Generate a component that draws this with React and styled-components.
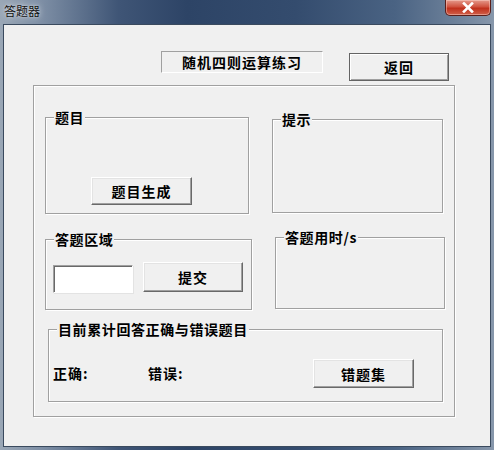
import React from "react";
import styled, { createGlobalStyle } from "styled-components";

const GlobalStyle = createGlobalStyle`
  html, body {
    margin: 0;
    padding: 0;
    overflow: hidden;
    background: #6d8098;
  }
  * {
    box-sizing: border-box;
  }
`;

const FONT = `"Noto Sans CJK SC", "Liberation Sans", sans-serif`;

export default function App() {
  return (
    <>
      <GlobalStyle />
      <Window>
        <TitleBar>
          <Caption>答题器</Caption>
          <CloseButton aria-label="close">
            <svg width="14" height="11" viewBox="0 0 14 11">
              <path
                d="M3 1.5 L11 9.5 M11 1.5 L3 9.5"
                stroke="#fff"
                strokeWidth="2.6"
                strokeLinecap="square"
              />
            </svg>
          </CloseButton>
        </TitleBar>
        <Client>
          <Header>
            <Banner>随机四则运算练习</Banner>
            <Button $w={100} $h={28} $mt={2} $default>
              返回
            </Button>
          </Header>
          <Frame>
            <Row>
              <Group $w={204} $h={97}>
                <Legend>题目</Legend>
                <GroupBody $pt={59} $pl={45}>
                  <Button $w={101} $h={28}>题目生成</Button>
                </GroupBody>
              </Group>
              <Group $w={171} $h={94} $ml={23} $mt={2}>
                <Legend>提示</Legend>
              </Group>
            </Row>
            <Row $mt={23}>
              <Group $w={207} $h={71} $mt={2}>
                <Legend>答题区域</Legend>
                <GroupBody $pt={22} $pl={7}>
                  <AnswerInput />
                  <Button $w={100} $h={30} $ml={10}>
                    提交
                  </Button>
                </GroupBody>
              </Group>
              <Group $w={170} $h={72} $ml={23}>
                <Legend>答题用时/s</Legend>
              </Group>
            </Row>
            <Row $mt={19}>
              <Group $w={395} $h={73} $ml={3}>
                <Legend>目前累计回答正确与错误题目</Legend>
                <GroupBody $pt={29} $pl={4}>
                  <Stat $w={95}>正确:</Stat>
                  <Stat $w={165}>错误:</Stat>
                  <Button $w={101} $h={29}>错题集</Button>
                </GroupBody>
              </Group>
            </Row>
          </Frame>
        </Client>
      </Window>
    </>
  );
}

const Window = styled.div`
  width: 494px;
  height: 450px;
  display: flex;
  flex-direction: column;
  padding: 0 3px 3px;
  background: linear-gradient(
    90deg,
    #9aa7b6 0%,
    #7f90a6 8%,
    #3f5576 24%,
    #2d4466 38%,
    #344c6e 60%,
    #4a6383 80%,
    #6c8099 92%,
    #8797ab 100%
  );
`;

const TitleBar = styled.div`
  height: 24px;
  flex: none;
  display: flex;
  justify-content: space-between;
  align-items: flex-start;
`;

const Caption = styled.span`
  margin: 3px 0 0 1px;
  font-family: ${FONT};
  font-size: 12px;
  line-height: 16px;
  color: #111;
  text-shadow: 0 0 6px rgba(255, 255, 255, 0.75), 0 0 2px rgba(255, 255, 255, 0.5);
`;

const CloseButton = styled.div`
  width: 46px;
  height: 16px;
  display: flex;
  align-items: center;
  justify-content: center;
  border: 1px solid #5a1e1a;
  border-top: none;
  border-radius: 0 0 5px 5px;
  background: linear-gradient(180deg, #e59a8c 0%, #d0523f 45%, #c0301c 55%, #d0604a 100%);
  box-shadow: inset 0 0 0 1px rgba(255, 220, 210, 0.45);
`;

const Client = styled.div`
  flex: 1;
  background: #f0f0f0;
  border: 1px solid #3a4a5e;
  font-family: ${FONT};
  font-weight: 700;
  font-size: 14px;
  color: #000;
`;

const Header = styled.div`
  height: 29px;
  margin: 26px 0 0 157px;
  display: flex;
  align-items: flex-start;
  gap: 26px;
`;

const Banner = styled.div`
  width: 162px;
  height: 22px;
  display: flex;
  align-items: center;
  justify-content: center;
  letter-spacing: 1px;
  border: 1px solid;
  border-color: #a0a0a0 #fff #fff #a0a0a0;
`;

const Button = styled.div`
  width: ${(p) => p.$w}px;
  height: ${(p) => p.$h}px;
  margin-top: ${(p) => p.$mt || 0}px;
  margin-left: ${(p) => p.$ml || 0}px;
  flex: none;
  display: flex;
  align-items: center;
  justify-content: center;
  letter-spacing: 1px;
  background: #f0f0f0;
  border: 1px solid;
  border-color: ${(p) =>
    p.$default ? "#646464" : "#fff #696969 #696969 #fff"};
  box-shadow: ${(p) =>
    p.$default
      ? "inset 1px 1px 0 #fff, inset -1px -1px 0 #a0a0a0"
      : "inset -1px -1px 0 #a0a0a0, inset 1px 1px 0 #e3e3e3"};
`;

const Frame = styled.div`
  width: 422px;
  height: 332px;
  margin: 5px 0 0 29px;
  padding: 31px 0 0 11px;
  border: 1px solid #a0a0a0;
  box-shadow: inset 1px 1px 0 #fff, 1px 1px 0 #fff;
`;

const Row = styled.div`
  display: flex;
  align-items: flex-start;
  margin-top: ${(p) => p.$mt || 0}px;
`;

const Group = styled.div`
  position: relative;
  flex: none;
  width: ${(p) => p.$w}px;
  height: ${(p) => p.$h}px;
  margin-top: ${(p) => p.$mt || 0}px;
  margin-left: ${(p) => p.$ml || 0}px;
  border: 1px solid #a0a0a0;
  box-shadow: inset 1px 1px 0 #fff, 1px 1px 0 #fff;
`;

const Legend = styled.span`
  position: absolute;
  top: -9px;
  left: 8px;
  padding: 0 1px;
  background: #f0f0f0;
  line-height: 16px;
  letter-spacing: 0.6px;
  white-space: nowrap;
`;

const GroupBody = styled.div`
  display: flex;
  align-items: flex-start;
  padding: ${(p) => p.$pt}px 0 0 ${(p) => p.$pl}px;
`;

const AnswerInput = styled.input`
  width: 80px;
  height: 28px;
  margin-top: 3px;
  padding: 0 3px;
  background: #fff;
  border: 1px solid;
  border-color: #a0a0a0 #fff #fff #a0a0a0;
  box-shadow: inset 1px 1px 0 #696969, 1px 1px 0 #e3e3e3;
  outline: none;
  font-family: ${FONT};
  font-size: 13px;
`;

const Stat = styled.span`
  width: ${(p) => p.$w}px;
  margin-top: 6px;
  line-height: 16px;
  letter-spacing: 1px;
`;
